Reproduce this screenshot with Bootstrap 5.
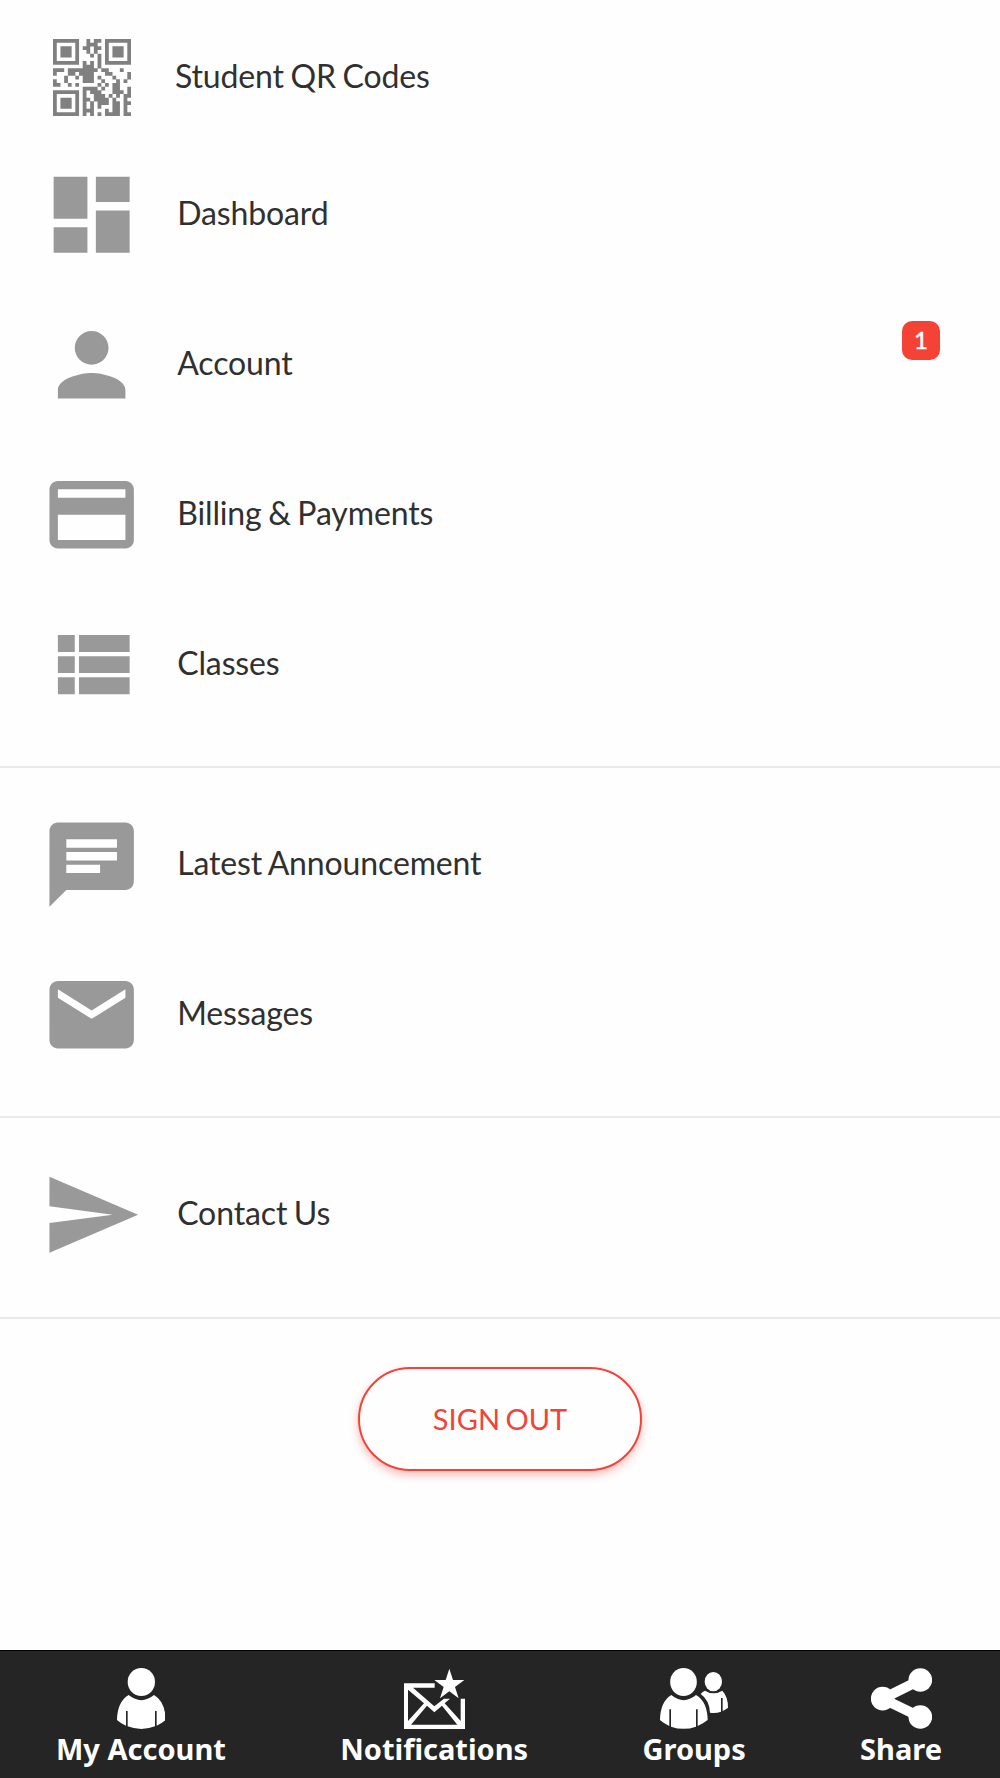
<!DOCTYPE html>
<html lang="en">
<head>
<meta charset="utf-8">
<meta name="viewport" content="width=device-width, initial-scale=1">
<title>Menu</title>
<link href="https://cdn.jsdelivr.net/npm/bootstrap@5.3.0/dist/css/bootstrap.min.css" rel="stylesheet">
<style>
  body { font-family: Lato, "Liberation Sans", sans-serif; color: #303030; background: #fefefe; min-height: 1778px; }
  .menu-group { border-bottom: 2px solid #e7ebee; padding: 22px 0 26px; }
  .menu-group-first { padding: 16px 0 26px; }
  .menu-group-last { padding-bottom: 27px; }
  .menu-item { height: 150px; padding-left: 41.3px; font-size: 32px; line-height: 40px; color: #303030; text-decoration: none; letter-spacing: -.13px; word-spacing: -1.5px; }
  .menu-item-qr { height: 124px; }
  .menu-icon { width: 101.3px; height: 101.3px; fill: #999; flex: none; margin-right: 34.6px; }
  .menu-icon-qr { width: 78px; height: 77px; fill: #808080; flex: none; margin: 0 44px 1px 11.7px; }
  .menu-label { padding-bottom: 5px; }
  .count-badge { width: 38px; height: 39px; border-radius: 10px; background: #f44336; font-size: 24px; font-weight: 400; line-height: 37px; margin: -49px 60px 0 auto; padding: 0; -webkit-text-stroke: .5px #fff; }
  .btn-signout { width: 284px; height: 104px; border: 2px solid #f44336; border-radius: 52px; color: #f44336; background: #fefefe; font-size: 29px; word-spacing: -2px; box-shadow: 0 4px 8px rgba(244,67,54,.35); margin-top: 48px; }
  .tabbar { height: 128px; background: #252525; border-top: 1px solid #000; padding: 17px 58px 0 56px; font-family: "Noto Sans", "Open Sans", sans-serif; }
  .tab-link { color: #fff; font-weight: 700; font-size: 29px; line-height: 40px; text-decoration: none; }
  .tab-link svg { height: 61px; fill: #fff; display: block; }
</style>
<script src="https://cdn.jsdelivr.net/npm/bootstrap@5.3.0/dist/js/bootstrap.bundle.min.js"></script>
</head>
<body class="d-flex flex-column">
<main class="flex-grow-1">
  <nav class="menu-group menu-group-first">
    <a href="#" class="menu-item menu-item-qr d-flex align-items-center">
      <svg class="menu-icon-qr" viewBox="0 0 21 21" preserveAspectRatio="none"><path id="qr"/></svg>
      <span class="menu-label">Student QR Codes</span></a>
    <a href="#" class="menu-item d-flex align-items-center">
      <svg class="menu-icon" viewBox="0 0 24 24"><path d="M3 13h8V3H3v10zm0 8h8v-6H3v6zm10 0h8V11h-8v10zm0-18v6h8V3h-8z"/></svg>
      <span class="menu-label">Dashboard</span></a>
    <a href="#" class="menu-item d-flex align-items-center">
      <svg class="menu-icon" viewBox="0 0 24 24"><path d="M12 12c2.21 0 4-1.79 4-4s-1.79-4-4-4-4 1.79-4 4 1.79 4 4 4zm0 2c-2.67 0-8 1.34-8 4v2h16v-2c0-2.66-5.33-4-8-4z"/></svg>
      <span class="menu-label">Account</span>
      <span class="badge count-badge">1</span></a>
    <a href="#" class="menu-item d-flex align-items-center">
      <svg class="menu-icon" viewBox="0 0 24 24"><path d="M20 4H4c-1.11 0-1.99.89-1.99 2L2 18c0 1.11.89 2 2 2h16c1.11 0 2-.89 2-2V6c0-1.11-.89-2-2-2zm0 14H4v-6h16v6zm0-10H4V6h16v2z"/></svg>
      <span class="menu-label">Billing &amp; Payments</span></a>
    <a href="#" class="menu-item d-flex align-items-center">
      <svg class="menu-icon" viewBox="0 0 24 24"><path d="M4 14h4v-4H4v4zm0 5h4v-4H4v4zM4 9h4V5H4v4zm5 5h12v-4H9v4zm0 5h12v-4H9v4zM9 5v4h12V5H9z"/></svg>
      <span class="menu-label">Classes</span></a>
  </nav>
  <nav class="menu-group">
    <a href="#" class="menu-item d-flex align-items-center">
      <svg class="menu-icon" viewBox="0 0 24 24"><path d="M20 2H4c-1.1 0-1.99.9-1.99 2L2 22l4-4h14c1.1 0 2-.9 2-2V4c0-1.1-.9-2-2-2zM6 9h12v2H6V9zm8 5H6v-2h8v2zm4-6H6V6h12v2z"/></svg>
      <span class="menu-label">Latest Announcement</span></a>
    <a href="#" class="menu-item d-flex align-items-center">
      <svg class="menu-icon" viewBox="0 0 24 24"><path d="M20 4H4c-1.1 0-1.99.9-1.99 2L2 18c0 1.1.9 2 2 2h16c1.1 0 2-.9 2-2V6c0-1.1-.9-2-2-2zm0 4l-8 5-8-5V6l8 5 8-5v2z"/></svg>
      <span class="menu-label">Messages</span></a>
  </nav>
  <nav class="menu-group menu-group-last">
    <a href="#" class="menu-item d-flex align-items-center">
      <svg class="menu-icon" viewBox="0 0 24 24"><path d="M2.01 21L23 12 2.01 3 2 10l15 2-15 2z"/></svg>
      <span class="menu-label">Contact Us</span></a>
  </nav>
  <div class="text-center"><button class="btn btn-signout" type="button">SIGN OUT</button></div>
</main>
<footer class="tabbar d-flex justify-content-between align-items-start">
  <a href="#" class="tab-link d-flex flex-column align-items-center">
    <svg viewBox="352 84 146 183"><ellipse cx="425" cy="126" rx="41" ry="42"/><path d="M387 165Q425 196 463 165Q497 185 498 240Q486 251 471 257V213H466V259Q425 275 384 259V213H379V257Q364 251 352 240Q353 185 387 165Z"/></svg>
    <span>My Account</span></a>
  <a href="#" class="tab-link d-flex flex-column align-items-center">
    <svg viewBox="252 84 183 183"><path d="M388 86L399 120H433L405 141L416 175L388 154L360 175L371 141L343 120H377Z"/><path fill-rule="evenodd" d="M252 130H344V143H279L343 199L372 176H390L374 190L422 243V176H435V267H252ZM264 149V243L312 190ZM321 197L273 254H412L366 197L343 217Z"/></svg>
    <span>Notifications</span></a>
  <a href="#" class="tab-link d-flex flex-column align-items-center">
    <svg viewBox="123 84 204 183"><ellipse cx="193.500" cy="126" rx="40" ry="42"/><path d="M157 165Q194 196 231 165Q265 185 266 240Q252 251 236 258V208H231V260Q194 273 156 260V208H151V258Q135 251 123 240Q124 185 157 165Z"/><ellipse cx="283" cy="125" rx="26" ry="29"/><path d="M258 152Q283 168 310 152Q327 170 327 203Q320 209 311 213V174H306V215Q290 221 273 218Q271 180 245 162Q251 155 258 152Z"/></svg>
    <span>Groups</span></a>
  <a href="#" class="tab-link d-flex flex-column align-items-center">
    <svg viewBox="753 84 183 183"><circle cx="901" cy="120" r="35.500"/><circle cx="788" cy="176" r="35.500"/><circle cx="901" cy="231" r="35.500"/><path d="M901 120L788 176L901 231" fill="none" stroke="#fff" stroke-width="30"/></svg>
    <span>Share</span></a>
</footer>
<script>
  // One string per row of QR modules; 1 is a filled module.
  const rows = [
    "111111100101101111111","100000100111001000001","101110101101101011101","101110100101001011101",
    "101110100010101011101","100000100000101000001","111111101010101111111","000000001110100000000",
    "111011111111011000100","100011011110001100001","000100101110100010001","100100001110010001010",
    "110010100000101011000","000000001111010011001","111111101011100011101","100000101001110101011",
    "101110101101111010010","101110101010111011011","101110101010100011010","100000101110001011010",
    "111111101010101111011"];
  document.getElementById("qr").setAttribute("d", rows.map((r, y) =>
    [...r].map((c, x) => c === "1" ? `M${x} ${y}h1.02v1.02h-1.02z` : "").join("")).join(""));
</script>
</body>
</html>
